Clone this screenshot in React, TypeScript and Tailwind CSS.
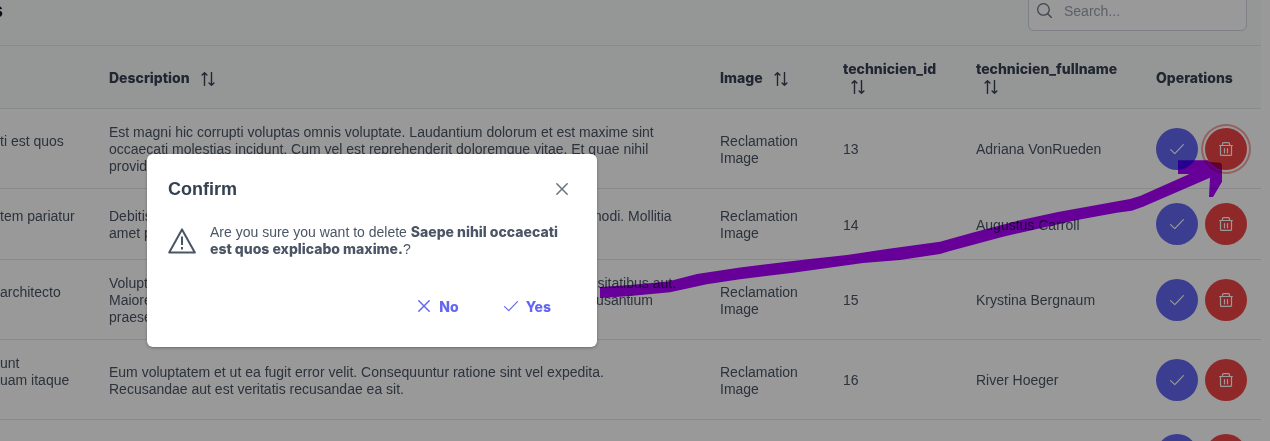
import React from "react";

type Reclamation = {
  title: string[];
  description: string;
  technicianId: number;
  technician: string;
  focused?: boolean;
};

const rows: Reclamation[] = [
  {
    title: ["ti est quos", "\u00a0"],
    description:
      "Est magni hic corrupti voluptas omnis voluptate. Laudantium dolorum et est maxime sint occaecati molestias incidunt. Cum vel est reprehenderit doloremque vitae. Et quae nihil provident dolor.",
    technicianId: 13,
    technician: "Adriana VonRueden",
    focused: true,
  },
  {
    title: ["tem pariatur", "\u00a0"],
    description:
      "Debitis nulla quia consequatur est. Itaque dolores qui quia autem et illum commodi. Mollitia amet placeat qui.",
    technicianId: 14,
    technician: "Augustus Carroll",
  },
  {
    title: ["architecto", "\u00a0"],
    description:
      "Voluptatem aut ut molestias voluptas maxime. Voluptatem sunt officiis ut necessitatibus aut. Maiores quia rerum qui molestiae voluptatem. Deleniti magni laborum eum accusantium praesentium.",
    technicianId: 15,
    technician: "Krystina Bergnaum",
  },
  {
    title: ["unt", "uam itaque", "\u00a0"],
    description:
      "Eum voluptatem et ut ea fugit error velit. Consequuntur ratione sint vel expedita. Recusandae aut est veritatis recusandae ea sit.",
    technicianId: 16,
    technician: "River Hoeger",
  },
  {
    title: [],
    description: "",
    technicianId: 17,
    technician: "",
  },
];

type IconProps = { className?: string };

function CheckIcon({ className = "size-3.5" }: IconProps) {
  return (
    <svg viewBox="0 0 14 14" className={className} fill="none" stroke="currentColor" strokeWidth="1.2" strokeLinecap="round" strokeLinejoin="round" aria-hidden="true">
      <path d="M0.6 7.6 4.8 11.6 13.4 2.7" />
    </svg>
  );
}

function TimesIcon({ className = "size-3.5" }: IconProps) {
  return (
    <svg viewBox="0 0 14 14" className={className} fill="none" stroke="currentColor" strokeWidth="1.5" strokeLinecap="round" aria-hidden="true">
      <path d="M1.8 1.8 12.2 12.2M12.2 1.8 1.8 12.2" />
    </svg>
  );
}

function TrashIcon() {
  return (
    <svg viewBox="0 0 14 14" className="size-3.5" fill="none" stroke="currentColor" strokeWidth="1.2" strokeLinejoin="round" strokeLinecap="round" aria-hidden="true">
      <path d="M0.6 3.5H13.4M3.5 3.5V1.5Q3.5 0.6 4.5 0.6H9.5Q10.5 0.6 10.5 1.5V3.5M1.5 3.5V12.5Q1.5 13.4 2.5 13.4H11.5Q12.5 13.4 12.5 12.5V3.5M5.5 6.5V10.8M8.5 6.5V10.8" />
    </svg>
  );
}

function SortIcon() {
  return (
    <svg viewBox="0 0 14 14" className="ml-2 inline size-3.5 align-middle" fill="none" stroke="currentColor" strokeWidth="1.4" strokeLinecap="round" strokeLinejoin="round" aria-hidden="true">
      <path d="M3.5 13.4V0.7M1.1 3 3.5 0.7 5.9 3M10.5 0.6V13.3M8.1 11 10.5 13.3 12.9 11" />
    </svg>
  );
}

function SearchIcon() {
  return (
    <svg viewBox="0 0 14 14" className="size-[15px] shrink-0" fill="none" stroke="currentColor" strokeWidth="1.2" strokeLinecap="round" aria-hidden="true">
      <circle cx="6" cy="6" r="5.4" />
      <path d="M10 10 13.5 13.5" />
    </svg>
  );
}

function WarningIcon() {
  return (
    <svg viewBox="0 0 28 28" className="size-7 shrink-0" fill="none" stroke="currentColor" strokeWidth="2" strokeLinejoin="round" aria-hidden="true">
      <path d="M14 2.4 26.8 25.6H1.2Z" />
      <path d="M14 9.5V18M14 20V22.5" />
    </svg>
  );
}

function HeaderCell({ label, sortable = true }: { label: string; sortable?: boolean }) {
  return (
    <th scope="col" className="border-b border-gray-200 p-3.5 text-left align-middle font-['Inter',sans-serif] font-extrabold text-gray-700">
      {label} {sortable && <SortIcon />}
    </th>
  );
}

function ReclamationTable() {
  return (
    <table className="w-full table-fixed border-collapse">
      <colgroup>
        <col className="w-[95px]" />
        <col />
        <col className="w-[123px]" />
        <col className="w-[133px]" />
        <col className="w-[180px]" />
        <col className="w-[119px]" />
      </colgroup>
      <thead className="bg-gray-50">
        <tr>
          <td className="border-b border-gray-200" />
          <HeaderCell label="Description" />
          <HeaderCell label="Image" />
          <HeaderCell label="technicien_id" />
          <HeaderCell label="technicien_fullname" />
          <HeaderCell label="Operations" sortable={false} />
        </tr>
      </thead>
      <tbody>
        {rows.map((row) => (
          <tr key={row.technicianId} className="border-b border-gray-200">
            <td className="pb-[13px] pt-[15px]">
              {row.title.map((line, i) => (
                <div key={i}>{line}</div>
              ))}
            </td>
            <td className="pb-[13px] pl-3.5 pr-6 pt-[15px]">{row.description}</td>
            <td className="px-3.5 pb-[13px] pt-[15px]">Reclamation Image</td>
            <td className="px-3.5 pb-[13px] pt-[15px]">{row.technicianId}</td>
            <td className="px-3.5 pb-[13px] pt-[15px]">{row.technician}</td>
            <td className="p-3.5">
              <div className="flex gap-[7px]">
                <button type="button" aria-label="Validate" className="flex size-[42px] shrink-0 items-center justify-center rounded-full bg-[#6366f1] text-white">
                  <CheckIcon />
                </button>
                <button
                  type="button"
                  aria-label="Delete"
                  className={
                    row.focused
                      ? "flex size-[42px] shrink-0 items-center justify-center rounded-full bg-[#ef4444] text-white shadow-[0_0_0_2px_#ffffff,0_0_0_4px_#f7a2a2]"
                      : "flex size-[42px] shrink-0 items-center justify-center rounded-full bg-[#ef4444] text-white"
                  }
                >
                  <TrashIcon />
                </button>
              </div>
            </td>
          </tr>
        ))}
      </tbody>
    </table>
  );
}

function PointerArrow() {
  return (
    <svg viewBox="600 155 630 150" className="pointer-events-none absolute left-[600px] top-[155px] h-[150px] w-[630px] mix-blend-multiply" aria-hidden="true">
      <path
        fill="#aa00ff"
        d="M600 287 L630 285 L668 281.5 L697 274 L740 267.5 L810 259 L847 255 L887 249 L940 241.7 L975 232 L1021 220 L1058 212 L1130 199 L1140 196 L1189.5 174 L1178 174 L1178 160.3 L1208 160.3 L1210 162 L1220.7 162.7 L1222 165 L1222 181.7 L1213 197 L1209 197 L1210 177.7 L1143 206.7 L1131.7 210.7 L1116.7 212.7 L1077 220 L1003 236.7 L950 251 L940 254 L900 260 L863 263 L793 272.7 L740 279.3 L706.7 284.3 L670 292.3 L630 296 L600 298Z"
      />
    </svg>
  );
}

function ConfirmDialog() {
  return (
    <div
      role="dialog"
      aria-modal="true"
      aria-labelledby="confirm-title"
      className="absolute left-[147px] top-[154px] w-[450px] rounded-md bg-white text-gray-600 shadow-[0_1px_3px_rgba(0,0,0,0.3)]"
    >
      <div className="flex items-center justify-between p-[21px]">
        <h2 id="confirm-title" className="text-lg/7 font-bold text-gray-700">Confirm</h2>
        <button type="button" aria-label="Close" className="flex size-7 items-center justify-center rounded-full text-gray-500">
          <TimesIcon />
        </button>
      </div>
      <div className="flex items-center gap-3.5 px-[21px] pb-7">
        <WarningIcon />
        <p>
          Are you sure you want to delete <b className="font-['Inter',sans-serif] font-extrabold leading-none">Saepe nihil occaecati est quos explicabo maxime.</b>?
        </p>
      </div>
      <div className="flex justify-end gap-[9px] px-7 pb-[21px] font-['Inter',sans-serif] font-extrabold text-[#6366f1]">
        <button type="button" className="flex h-10 items-center gap-2 px-[18px]">
          <TimesIcon />
          No
        </button>
        <button type="button" className="flex h-10 items-center gap-2 px-[18px]">
          <CheckIcon />
          Yes
        </button>
      </div>
    </div>
  );
}

export default function App() {
  return (
    <div className="relative h-screen overflow-hidden bg-white font-['Liberation_Sans',sans-serif] text-[14px]/[17px] text-gray-600">
      <main className="-mt-[25px] pr-[9px]">
        <div className="flex items-center justify-between border-b border-gray-200 bg-gray-50 py-3.5 pr-3.5">
          <h1 className="flex w-[3px] justify-end overflow-hidden text-xl font-bold text-gray-900">s</h1>
          <label className="flex h-[42px] w-[219px] items-center gap-3 rounded-md border border-gray-300 bg-white px-2 text-gray-500">
            <SearchIcon />
            <input type="text" aria-label="Search" placeholder="Search..." className="min-w-0 flex-1 bg-transparent pt-0.5 outline-none placeholder:text-gray-400" />
          </label>
        </div>
        <ReclamationTable />
      </main>
      <PointerArrow />
      <div className="absolute inset-0 bg-black/40" />
      <ConfirmDialog />
    </div>
  );
}
